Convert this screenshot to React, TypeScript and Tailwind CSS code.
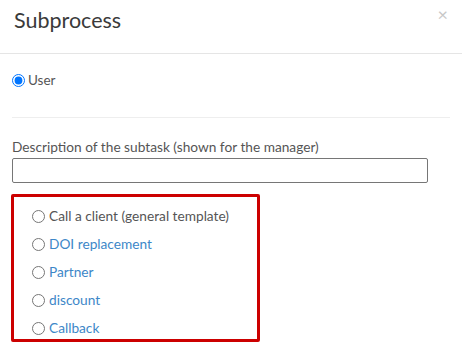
import React from 'react';

const options = [
  { id: 'general', label: 'Call a client (general template)', link: false },
  { id: 'doi', label: 'DOI replacement', link: true },
  { id: 'partner', label: 'Partner', link: true },
  { id: 'discount', label: 'discount', link: true },
  { id: 'callback', label: 'Callback', link: true },
];

function App() {
  return (
    <div
      className="w-[462px] h-[346px] overflow-hidden bg-white text-[#555]"
      style={{ fontFamily: 'Lato, "Open Sans", sans-serif' }}
    >
      {/* Modal header */}
      <div className="flex items-start justify-between h-[54px] border-b border-[#e5e5e5] pl-[14px] pr-[14px]">
        <h3 className="mt-[5px] text-[21.5px] leading-[30px] text-[#3a3a3a] font-normal">Subprocess</h3>
        <button className="mt-[4px] text-[18px] leading-[20px] text-[#c8c8c8]">×</button>
      </div>

      <div className="px-3">
        <label className="flex items-center gap-[3px] h-[26px] mt-[13px] text-[13.5px] text-[#555]">
          <input type="radio" name="who" defaultChecked className="m-0 w-[13px] h-[13px]" />
          User
        </label>

        <div className="mt-[24px] border-t border-[#eee]" />

        <div className="mt-[21px] text-[13.7px] leading-[16px] text-[#555]">
          Description of the subtask (shown for the manager)
        </div>
        <input
          type="text"
          className="block mt-[3px] w-[416px] h-[25px] border border-[#767676] rounded-[2px] outline-none"
        />

        <div className="mt-[11px] -ml-px w-[249px] h-[148px] border-[3px] border-[#c00] rounded-[2px] pt-[5px] pl-[18px]">
          {options.map((o) => (
            <label key={o.id} className="flex items-center gap-[4px] h-[28px] text-[13.7px]">
              <input type="radio" name="tpl" className="m-0 w-[13px] h-[13px]" />
              <span className={o.link ? 'text-[#3d87c8]' : 'text-[#555]'}>{o.label}</span>
            </label>
          ))}
        </div>
      </div>
    </div>
  );
}

export default App;
